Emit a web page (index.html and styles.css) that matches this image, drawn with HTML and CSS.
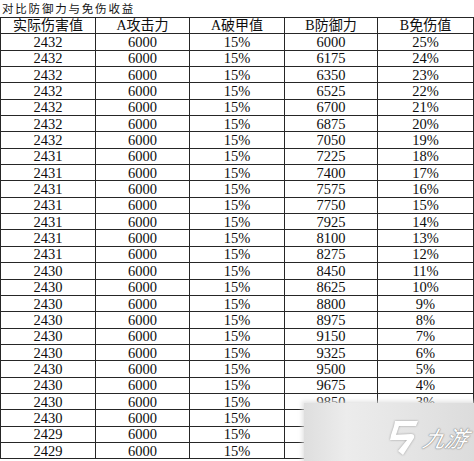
FILE: index.html
```html
<!DOCTYPE html>
<html lang="zh">
<head>
<meta charset="utf-8">
<link rel="stylesheet" href="styles.css">
</head>
<body>
<div class="page">
  <div class="title">对比防御力与免伤收益</div>
  <table class="grid">
    <colgroup>
      <col class="c1"><col class="c2"><col class="c3"><col class="c4"><col class="c5">
    </colgroup>
    <tr class="head"><td>实际伤害值</td><td>A攻击力</td><td>A破甲值</td><td>B防御力</td><td>B免伤值</td></tr>
    <tr><td>2432</td><td>6000</td><td>15%</td><td>6000</td><td>25%</td></tr>
    <tr><td>2432</td><td>6000</td><td>15%</td><td>6175</td><td>24%</td></tr>
    <tr><td>2432</td><td>6000</td><td>15%</td><td>6350</td><td>23%</td></tr>
    <tr><td>2432</td><td>6000</td><td>15%</td><td>6525</td><td>22%</td></tr>
    <tr><td>2432</td><td>6000</td><td>15%</td><td>6700</td><td>21%</td></tr>
    <tr><td>2432</td><td>6000</td><td>15%</td><td>6875</td><td>20%</td></tr>
    <tr><td>2432</td><td>6000</td><td>15%</td><td>7050</td><td>19%</td></tr>
    <tr><td>2431</td><td>6000</td><td>15%</td><td>7225</td><td>18%</td></tr>
    <tr><td>2431</td><td>6000</td><td>15%</td><td>7400</td><td>17%</td></tr>
    <tr><td>2431</td><td>6000</td><td>15%</td><td>7575</td><td>16%</td></tr>
    <tr><td>2431</td><td>6000</td><td>15%</td><td>7750</td><td>15%</td></tr>
    <tr><td>2431</td><td>6000</td><td>15%</td><td>7925</td><td>14%</td></tr>
    <tr><td>2431</td><td>6000</td><td>15%</td><td>8100</td><td>13%</td></tr>
    <tr><td>2431</td><td>6000</td><td>15%</td><td>8275</td><td>12%</td></tr>
    <tr><td>2430</td><td>6000</td><td>15%</td><td>8450</td><td>11%</td></tr>
    <tr><td>2430</td><td>6000</td><td>15%</td><td>8625</td><td>10%</td></tr>
    <tr><td>2430</td><td>6000</td><td>15%</td><td>8800</td><td>9%</td></tr>
    <tr><td>2430</td><td>6000</td><td>15%</td><td>8975</td><td>8%</td></tr>
    <tr><td>2430</td><td>6000</td><td>15%</td><td>9150</td><td>7%</td></tr>
    <tr><td>2430</td><td>6000</td><td>15%</td><td>9325</td><td>6%</td></tr>
    <tr><td>2430</td><td>6000</td><td>15%</td><td>9500</td><td>5%</td></tr>
    <tr><td>2430</td><td>6000</td><td>15%</td><td>9675</td><td>4%</td></tr>
    <tr><td>2430</td><td>6000</td><td>15%</td><td>9850</td><td>3%</td></tr>
    <tr><td>2430</td><td>6000</td><td>15%</td><td></td><td></td></tr>
    <tr><td>2429</td><td>6000</td><td>15%</td><td></td><td></td></tr>
    <tr><td>2429</td><td>6000</td><td>15%</td><td></td><td></td></tr>
  </table>
  <div class="watermark">
    <svg class="wm-logo" width="30" height="36" viewBox="0 0 30 36">
      <path d="M7 1 L30 1 L28 6 L6 6 Z" />
      <path d="M6 6 L11 6 L8 15 L3 15 Z" />
      <path d="M3 15 L23 14 Q27 14 26 18 L15 35 L10 31 L19 20 L2 20 Z" />
    </svg>
    <span class="wm-text">九游</span>
  </div>
</div>
</body>
</html>
```
FILE: styles.css
```css
html, body {
  margin: 0;
  padding: 0;
  background: #ffffff;
}

.page {
  position: relative;
  width: 474px;
  height: 461px;
  overflow: hidden;
  font-family: "Liberation Serif", "Noto Sans CJK SC", serif;
  color: #0e0e0e;
}

.title {
  height: 17px;
  line-height: 17px;
  padding-left: 2px;
  font-family: "Noto Sans CJK SC", sans-serif;
  font-size: 11.5px;
  letter-spacing: 1.8px;
  color: #151515;
  white-space: nowrap;
}

.grid {
  border-collapse: collapse;
  table-layout: fixed;
  width: 474px;
}

.c1 { width: 95px; }
.c2 { width: 94px; }
.c3 { width: 95px; }
.c4 { width: 93px; }
.c5 { width: 96px; }

.grid tr {
  height: 16.35px;
}

.grid td {
  border: 1px solid #262626;
  padding: 0;
  text-align: center;
  vertical-align: middle;
  font-size: 14.5px;
  line-height: 14px;
  white-space: nowrap;
  overflow: hidden;
}

.head td {
  font-family: "Liberation Serif", "Noto Sans CJK SC", serif;
  font-size: 14px;
}

.watermark {
  position: absolute;
  left: 304px;
  top: 403px;
  width: 170px;
  height: 58px;
  background: linear-gradient(90deg, #dedede 0%, #ececec 25%, #e6e6e6 55%, #dcdcdc 100%);
  box-shadow: 0 0 4px 2px rgba(220, 220, 220, 0.8);
}

.wm-logo {
  position: absolute;
  left: 84px;
  top: 17px;
  fill: #ffffff;
  filter: drop-shadow(0 0 1px #9a9a9a);
}

.wm-text {
  position: absolute;
  left: 120px;
  top: 21px;
  font-family: "Noto Sans CJK SC", sans-serif;
  font-size: 22px;
  line-height: 26px;
  font-weight: 400;
  font-style: italic;
  color: #ffffff;
  transform: skewX(-14deg);
  text-shadow: 0 0 1px #8a8a8a, 0 0 1px #8a8a8a, 0 0 2px #a0a0a0;
}
```
